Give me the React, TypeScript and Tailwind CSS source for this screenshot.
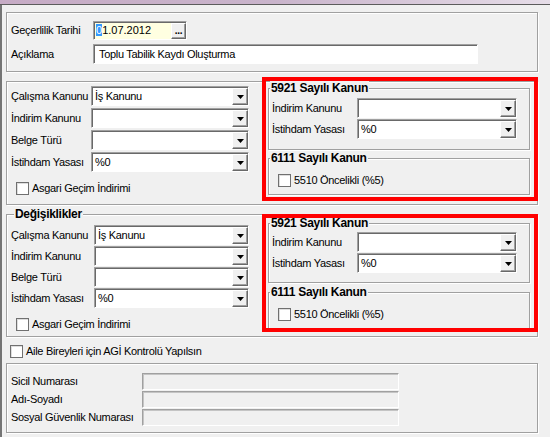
import React from 'react'

const sunken =
  'border border-t-[#a0a0a0] border-l-[#a0a0a0] border-r-white border-b-white shadow-[inset_1px_1px_0_#696969]'
const raised =
  'border border-t-white border-l-white border-r-[#696969] border-b-[#696969] shadow-[inset_-1px_-1px_0_#a0a0a0]'

function Group({
  className = '',
  title,
  titleClass = '',
  children,
}: {
  className?: string
  title?: string
  titleClass?: string
  children?: React.ReactNode
}) {
  return (
    <div
      className={`relative shrink-0 border border-[#a0a0a0] shadow-[inset_1px_1px_0_#fff,1px_1px_0_#fff] ${className}`}
    >
      {title && (
        <span
          className={`absolute -top-[8px] bg-[#f0f0f0] px-px font-bold text-[12px] leading-[14px] ${titleClass}`}
        >
          {title}
        </span>
      )}
      {children}
    </div>
  )
}

function Combo({ value = '', w }: { value?: string; w: string }) {
  return (
    <div className={`${w} h-[20px] shrink-0 flex bg-white ${sunken}`}>
      <span className="flex-1 pl-[3px] pt-px leading-[16px] whitespace-nowrap">{value}</span>
      <div className={`w-[16px] mt-px flex items-center justify-center bg-[#f0f0f0] ${raised}`}>
        <svg width="7" height="4" viewBox="0 0 7 4">
          <path d="M0 0h7L3.5 4z" fill="#000" />
        </svg>
      </div>
    </div>
  )
}

function Row({ label, lw, h = 'h-[20px]', children }: { label: string; lw: string; h?: string; children: React.ReactNode }) {
  return (
    <div className={`flex items-center ${h}`}>
      <span className={`${lw} shrink-0 whitespace-nowrap`}>{label}</span>
      {children}
    </div>
  )
}

function Check({ label }: { label: string }) {
  return (
    <div className="flex items-center gap-[3px] h-[13px]">
      <div className="w-[13px] h-[13px] shrink-0 bg-white border border-[#707070] shadow-[inset_1px_1px_0_#dedede]" />
      <span className="whitespace-nowrap">{label}</span>
    </div>
  )
}

function Disabled() {
  return (
    <div className="w-[257px] h-[17px] bg-[#f0f0f0] border border-[#a0a0a0] border-r-white border-b-white shadow-[inset_1px_1px_0_#c4c4c4]" />
  )
}

export default function App() {
  return (
    <div className="w-[550px] h-[437px] overflow-hidden bg-[#f0f0f0] text-black text-[11px] leading-[13px] tracking-[-0.3px] font-['Liberation_Sans',Arial,sans-serif] flex flex-col">
      <div className="h-[4px] shrink-0 bg-gradient-to-r from-[#c6abc5] via-[#c9b4cb] to-[#e6dde8]" />
      <div className="h-px shrink-0 bg-[#5c5c5c]" />
      <div className="flex flex-1 min-h-0">
        <div className="w-[2px] shrink-0 bg-[#747474]" />
        <div className="flex flex-col pl-[4px]">
          {/* üst bilgi */}
          <Group className="mt-[7px] w-[532px] h-[60px] pl-[4px] pt-[8px] flex flex-col gap-[4px]">
            <Row label="Geçerlilik Tarihi" lw="w-[82px]" h="h-[19px]">
              <div className={`w-[94px] h-[19px] flex bg-[#ffffe1] ${sunken}`}>
                <span className="flex-1 pl-[2px] pt-px leading-[15px] tracking-normal">
                  <span className="bg-[#3399ff] text-white">0</span>1.07.2012
                </span>
                <div className={`w-[15px] mt-px flex items-end justify-center pb-[3px] bg-[#f0f0f0] font-bold text-[10px] leading-[8px] ${raised}`}>
                  ...
                </div>
              </div>
            </Row>
            <Row label="Açıklama" lw="w-[82px]">
              <div className={`w-[385px] h-[20px] bg-white pl-[5px] pt-px leading-[16px] ${sunken}`}>
                Toplu Tabilik Kaydı Oluşturma
              </div>
            </Row>
          </Group>

          {/* kanun bilgileri */}
          <Group className="mt-[9px] w-[532px] h-[124px] flex">
            <div className="w-[255px] shrink-0 pl-[4px] pt-[4px] flex flex-col">
              <div className="flex flex-col gap-[2px]">
                <Row label="Çalışma Kanunu" lw="w-[80px]">
                  <Combo value="İş Kanunu" w="w-[158px]" />
                </Row>
                <Row label="İndirim Kanunu" lw="w-[80px]">
                  <Combo w="w-[158px]" />
                </Row>
                <Row label="Belge Türü" lw="w-[80px]">
                  <Combo w="w-[158px]" />
                </Row>
                <Row label="İstihdam Yasası" lw="w-[80px]">
                  <Combo value="%0" w="w-[158px]" />
                </Row>
              </div>
              <div className="mt-[10px] ml-[5px]">
                <Check label="Asgari Geçim İndirimi" />
              </div>
            </div>
            <div className="-mt-[5px] w-[276px] h-[124px] shrink-0 border-4 border-[#ff0000] overflow-hidden flex flex-col">
              <Group
                title="5921 Sayılı Kanun"
                titleClass="left-px"
                className="ml-[2px] mt-[7px] w-[262px] h-[62px] pl-[3px] pt-[9px] flex flex-col gap-px"
              >
                <Row label="İndirim Kanunu" lw="w-[85px]">
                  <Combo w="w-[160px]" />
                </Row>
                <Row label="İstihdam Yasası" lw="w-[85px]">
                  <Combo value="%0" w="w-[160px]" />
                </Row>
              </Group>
              <Group
                title="6111 Sayılı Kanun"
                titleClass="left-px"
                className="ml-[2px] mt-[8px] w-[262px] h-[37px] pl-[9px] pt-[15px]"
              >
                <Check label="5510 Öncelikli (%5)" />
              </Group>
            </div>
          </Group>

          {/* değişiklikler */}
          <Group
            title="Değişiklikler"
            titleClass="left-[7px]"
            className="mt-[9px] w-[532px] h-[123px] flex"
          >
            <div className="w-[255px] shrink-0 pl-[4px] pt-[10px] flex flex-col">
              <div className="flex flex-col gap-px">
                <Row label="Çalışma Kanunu" lw="w-[83px]">
                  <Combo value="İş Kanunu" w="w-[155px]" />
                </Row>
                <Row label="İndirim Kanunu" lw="w-[83px]">
                  <Combo w="w-[155px]" />
                </Row>
                <Row label="Belge Türü" lw="w-[83px]">
                  <Combo w="w-[155px]" />
                </Row>
                <Row label="İstihdam Yasası" lw="w-[83px]">
                  <Combo value="%0" w="w-[155px]" />
                </Row>
              </div>
              <div className="mt-[10px] ml-[5px]">
                <Check label="Asgari Geçim İndirimi" />
              </div>
            </div>
            <div className="-mt-px w-[276px] h-[118px] shrink-0 border-4 border-[#ff0000] overflow-hidden flex flex-col">
              <Group
                title="5921 Sayılı Kanun"
                titleClass="left-px"
                className="ml-[2px] mt-[5px] w-[262px] h-[60px] pl-[3px] pt-[8px] flex flex-col gap-px"
              >
                <Row label="İndirim Kanunu" lw="w-[85px]">
                  <Combo w="w-[160px]" />
                </Row>
                <Row label="İstihdam Yasası" lw="w-[85px]">
                  <Combo value="%0" w="w-[160px]" />
                </Row>
              </Group>
              <Group
                title="6111 Sayılı Kanun"
                titleClass="left-px"
                className="ml-[2px] mt-[9px] w-[262px] h-[40px] pl-[9px] pt-[15px]"
              >
                <Check label="5510 Öncelikli (%5)" />
              </Group>
            </div>
          </Group>

          <div className="mt-[8px] ml-[4px]">
            <Check label="Aile Bireyleri için AGİ Kontrolü Yapılsın" />
          </div>

          {/* kişi bilgileri */}
          <Group className="mt-[5px] w-[532px] h-[70px] pl-[4px] pt-[9px] flex flex-col gap-px">
            <Row label="Sicil Numarası" lw="w-[131px]" h="h-[17px]">
              <Disabled />
            </Row>
            <Row label="Adı-Soyadı" lw="w-[131px]" h="h-[17px]">
              <Disabled />
            </Row>
            <Row label="Sosyal Güvenlik Numarası" lw="w-[131px]" h="h-[17px]">
              <Disabled />
            </Row>
          </Group>
        </div>
      </div>
    </div>
  )
}
